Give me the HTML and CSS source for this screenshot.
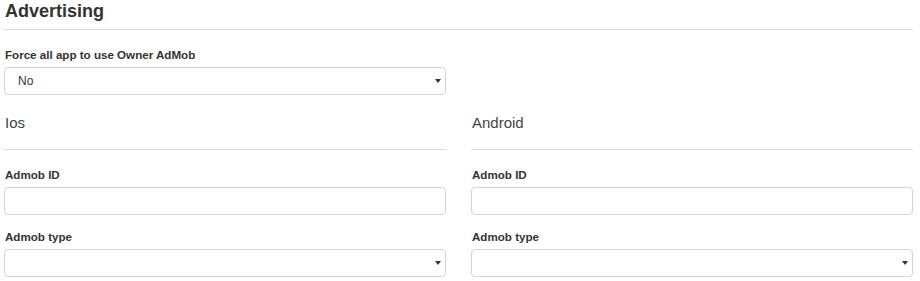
FILE: index.html
```html
<!DOCTYPE html>
<html lang="en">
<head>
<meta charset="UTF-8">
<meta name="viewport" content="width=device-width, initial-scale=1.0">
<title>Advertising</title>
<link rel="stylesheet" href="styles.css">
</head>
<body>

<!-- Advertising settings -->
<div class="panel">
    <h2>Advertising</h2>
    <hr class="rule">

    <div class="form-grid">
        <div class="field first">
            <label for="force_owner">Force all app to use Owner AdMob</label>
            <span class="select-wrap">
                <select id="force_owner">
                    <option value="0">No</option>
                    <option value="1">Yes</option>
                </select>
            </span>
        </div>
        <div></div>

        <!-- iOS -->
        <div class="platform">
            <h3>Ios</h3>
            <hr class="rule sub">
            <div class="field">
                <label for="ios_admob_id">Admob ID</label>
                <input type="text" id="ios_admob_id">
            </div>
            <div class="field">
                <label for="ios_admob_type">Admob type</label>
                <span class="select-wrap">
                    <select id="ios_admob_type">
                        <option value=""></option>
                    </select>
                </span>
            </div>
        </div>

        <!-- Android -->
        <div class="platform">
            <h3>Android</h3>
            <hr class="rule sub">
            <div class="field">
                <label for="android_admob_id">Admob ID</label>
                <input type="text" id="android_admob_id">
            </div>
            <div class="field">
                <label for="android_admob_type">Admob type</label>
                <span class="select-wrap">
                    <select id="android_admob_type">
                        <option value=""></option>
                    </select>
                </span>
            </div>
        </div>
    </div>
</div>

</body>
</html>
```

FILE: styles.css
```css
/* General */
* {
    margin: 0;
    padding: 0;
    box-sizing: border-box;
}

body {
    background: #fff;
    font-family: 'Liberation Sans', Arial, sans-serif;
    color: #333;
}

.panel {
    padding: 0 7px 0 4px;
}

/* Headings */
h2 {
    margin-top: 1px;
    font-size: 18px;
    line-height: 20px;
    font-weight: bold;
    color: #333;
    padding-left: 1px;
}

h3 {
    margin-top: 18px;
    font-size: 15px;
    line-height: 20px;
    font-weight: normal;
    color: #444;
    padding-left: 1px;
}

.rule {
    border: 0;
    border-top: 1px solid #dcdcdc;
    margin-top: 8px;
}

.rule.sub {
    margin-top: 16px;
}

/* Two column layout */
.form-grid {
    display: grid;
    grid-template-columns: 1fr 1fr;
    column-gap: 25px;
}

/* Fields */
.field {
    margin-top: 13px;
}

.field.first {
    margin-top: 16px;
}

.platform .field:first-of-type {
    margin-top: 16px;
}

label {
    display: block;
    font-size: 11.6px;
    line-height: 17px;
    font-weight: bold;
    color: #333;
    margin-bottom: 4px;
    padding-left: 1px;
}

input, select {
    display: block;
    width: 100%;
    height: 28px;
    border: 1px solid #d4d4d4;
    border-radius: 4px;
    background: #fff;
    font-family: inherit;
    font-size: 12px;
    color: #333;
    outline: none;
}

input {
    padding: 0 12px;
}

select {
    appearance: none;
    -webkit-appearance: none;
    padding: 0 20px 0 13px;
}

/* Select arrow */
.select-wrap {
    position: relative;
    display: block;
}

.select-wrap::after {
    content: "";
    position: absolute;
    right: 5px;
    top: 12px;
    border-left: 3px solid transparent;
    border-right: 3px solid transparent;
    border-top: 4px solid #333;
    pointer-events: none;
}
```
